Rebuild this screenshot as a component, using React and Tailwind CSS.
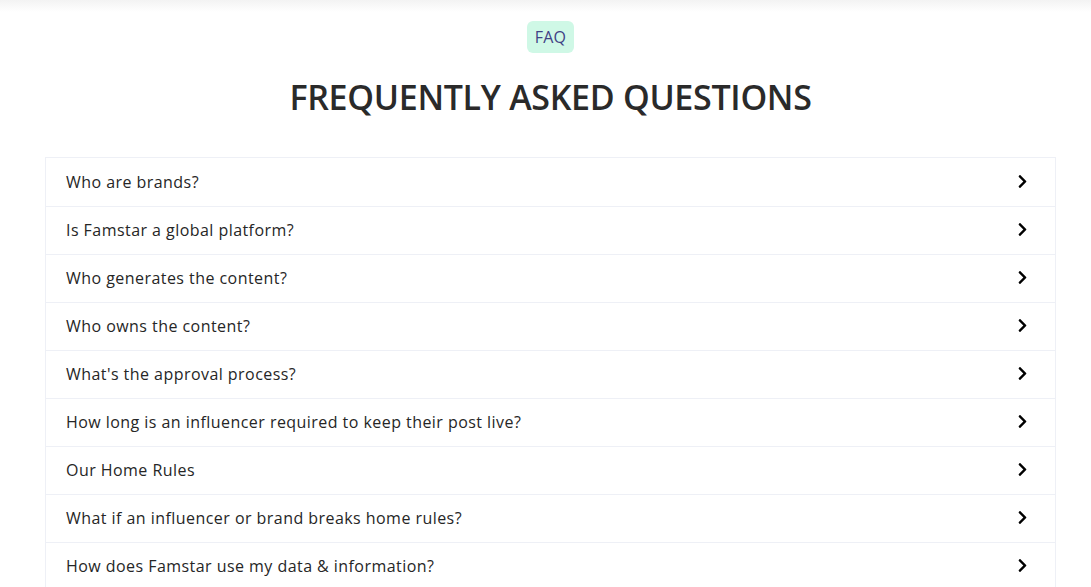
import { FaChevronRight } from 'react-icons/fa'

const questions = [
  'Who are brands?',
  'Is Famstar a global platform?',
  'Who generates the content?',
  'Who owns the content?',
  "What's the approval process?",
  'How long is an influencer required to keep their post live?',
  'Our Home Rules',
  'What if an influencer or brand breaks home rules?',
  'How does Famstar use my data & information?',
]

export default function App() {
  return (
    <div className="min-h-screen bg-white font-['Open_Sans',sans-serif]">
      <div className="h-[12px] bg-gradient-to-b from-[#f3f3f3] to-white" />
      <div className="ml-[45px] mr-[35px]">
        {/* Header */}
        <div className="flex flex-col items-center pt-[9px]">
          <span className="rounded-md bg-[#cff8e6] px-2 py-[5px] text-[16px] leading-[22px] tracking-[0.3px] text-[#3f4185]">
            FAQ
          </span>
          <h2 className="mt-[22px] text-[34px] font-semibold leading-[44px] tracking-[-0.3px] text-[#2a2a2a]">
            FREQUENTLY ASKED QUESTIONS
          </h2>
        </div>

        {/* Questions */}
        <div className="mt-[38px] border-t border-[#eef0f6]">
          {questions.map((q) => (
            <div
              key={q}
              className="flex h-[48px] items-center justify-between border-x border-b border-[#eef0f6] pb-[2px] pl-[20px] pr-[25px] first:h-[49px] first:pt-[1px]"
            >
              <span className="text-[16px] tracking-[0.45px] text-[#262626]">{q}</span>
              <FaChevronRight className="h-[15px] w-[15px] text-black" />
            </div>
          ))}
        </div>
      </div>
    </div>
  )
}
